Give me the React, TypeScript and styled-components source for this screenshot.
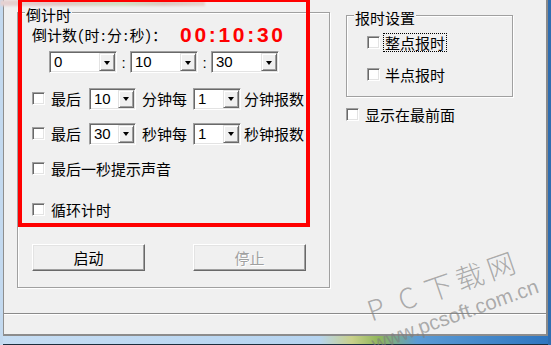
import React from "react";
import styled, { createGlobalStyle } from "styled-components";

const Global = createGlobalStyle`
  html, body { margin: 0; padding: 0; background: #f0f0f0; }
  * { box-sizing: border-box; }
`;

const CJK = `"Noto Sans CJK SC", "Noto Sans", sans-serif`;

const Screen = styled.div`
  position: relative;
  width: 551px;
  height: 345px;
  overflow: hidden;
`;

const Window = styled.div`
  width: 551px;
  height: 345px;
  display: flex;
  flex-direction: column;
  background: #f0f0f0;
  border-left: 3px solid #c3d9ef;
  border-right: 3px solid #2f6db0;
`;

const Client = styled.div`
  flex: 1;
  display: flex;
  flex-direction: column;
  border-left: 1px solid #8e8e8e;
  border-right: 2px solid #8a8a8a;
`;

const Main = styled.div`
  height: 313px;
  display: flex;
  align-items: flex-start;
  padding-left: 13px;
`;

const StatusBar = styled.div`
  height: 23px;
  border-top: 1px solid #8a8a8a;
  border-bottom: 2px solid #8c8c8c;
  box-shadow: inset 0 1px 0 #ffffff;
`;

const BottomFrame = styled.div`
  height: 9px;
  background: linear-gradient(
    90deg,
    #c6ddf3 0%,
    #b6d4f0 58%,
    #c9d08a 64%,
    #8fb65a 69%,
    #5b9bd5 76%,
    #2f76c0 100%
  );
  border-bottom: 1px solid #1d2d3d;
`;

const Group = styled.div<{ $w: number; $h: number; $mt: number; $pl: number }>`
  position: relative;
  width: ${(p) => p.$w}px;
  height: ${(p) => p.$h}px;
  margin-top: ${(p) => p.$mt}px;
  border: 1px solid #a0a0a0;
  box-shadow: inset 1px 1px 0 #ffffff, 1px 1px 0 #ffffff;
  display: flex;
  flex-direction: column;
  align-items: flex-start;
  padding-left: ${(p) => p.$pl}px;
`;

const GroupTitle = styled.span`
  position: absolute;
  left: 7px;
  top: -9px;
  height: 18px;
  line-height: 18px;
  padding: 0 1px;
  background: #f0f0f0;
  font: 15px ${CJK};
  color: #000;
`;

const Row = styled.div<{ $mt: number; $ml?: number; $h?: number }>`
  display: flex;
  align-items: center;
  margin-top: ${(p) => p.$mt}px;
  margin-left: ${(p) => p.$ml ?? 0}px;
  height: ${(p) => p.$h ?? 23}px;
`;

const Text = styled.span<{ $ml?: number; $w?: number }>`
  font: 15px ${CJK};
  font-feature-settings: "hwid" 1;
  line-height: 1;
  color: #000;
  white-space: nowrap;
  margin-left: ${(p) => p.$ml ?? 0}px;
  ${(p) => (p.$w ? `width: ${p.$w}px;` : "")}
`;

const FocusText = styled.span`
  font: 15px ${CJK};
  line-height: 1;
  color: #000;
  white-space: nowrap;
  margin-left: 3px;
  padding: 1px 1px;
  border: 1px dotted #000;
`;

const Time = styled.span`
  font: bold 21px "Liberation Sans", Arial, sans-serif;
  letter-spacing: 2.7px;
  color: #ff0000;
  line-height: 1;
`;

const Sep = styled.span`
  width: 13px;
  text-align: center;
  font: 15px "Liberation Sans", Arial, sans-serif;
  color: #000;
`;

const Combo = styled.div<{ $w: number; $ml?: number }>`
  display: flex;
  width: ${(p) => p.$w}px;
  height: 22px;
  margin-left: ${(p) => p.$ml ?? 0}px;
  padding: 1px;
  background: #ffffff;
  border: 1px solid;
  border-color: #a0a0a0 #ffffff #ffffff #a0a0a0;
  box-shadow: inset 1px 1px 0 #696969, inset -1px -1px 0 #e3e3e3;
`;

const ComboValue = styled.span`
  flex: 1;
  padding-left: 3px;
  font: 15px "Liberation Sans", Arial, sans-serif;
  line-height: 18px;
  color: #000;
`;

const ComboButton = styled.span`
  width: 16px;
  height: 18px;
  display: flex;
  align-items: center;
  justify-content: center;
  background: #f0f0f0;
  border: 1px solid;
  border-color: #e3e3e3 #696969 #696969 #e3e3e3;
  box-shadow: inset 1px 1px 0 #ffffff, inset -1px -1px 0 #a0a0a0;
`;

const Arrow = styled.span`
  width: 0;
  height: 0;
  margin-top: 1px;
  border-left: 3.5px solid transparent;
  border-right: 3.5px solid transparent;
  border-top: 4px solid #000;
`;

const Check = styled.span`
  width: 13px;
  height: 13px;
  flex: none;
  background: #ffffff;
  border: 1px solid;
  border-color: #a0a0a0 #ffffff #ffffff #a0a0a0;
  box-shadow: inset 1px 1px 0 #696969, inset -1px -1px 0 #e3e3e3;
`;

const ButtonRow = styled.div`
  display: flex;
  gap: 48px;
  margin-top: 23px;
`;

const Button = styled.div<{ $disabled?: boolean }>`
  width: 113px;
  height: 27px;
  display: flex;
  align-items: center;
  justify-content: center;
  background: #f0f0f0;
  border: 1px solid;
  border-color: #ffffff #696969 #696969 #ffffff;
  box-shadow: inset -1px -1px 0 #a0a0a0, inset 1px 1px 0 #e3e3e3;
  font: 15px ${CJK};
  color: ${(p) => (p.$disabled ? "#a0a0a0" : "#000")};
  text-shadow: ${(p) => (p.$disabled ? "1px 1px 0 #ffffff" : "none")};
`;

const RightColumn = styled.div`
  display: flex;
  flex-direction: column;
  margin-left: 16px;
`;

const RedFrame = styled.div`
  position: absolute;
  left: 18px;
  top: -2px;
  width: 292px;
  height: 229px;
  border: 4px solid #ff0000;
  pointer-events: none;
`;

const TopBlur = styled.div`
  position: absolute;
  left: 0;
  top: 0;
  width: 205px;
  height: 6px;
  background: linear-gradient(
    90deg,
    #e6d2d2 0%,
    #e2c8c6 30%,
    #d6d6c4 45%,
    #cfe0c4 60%,
    #dcc9c2 80%,
    #e6d3ce 100%
  );
  filter: blur(0.8px);
`;

const WmBig = styled.div`
  position: absolute;
  left: 438px;
  top: 286px;
  display: flex;
  transform: translate(-50%, -50%) rotate(-19deg);
  font: 300 28px ${CJK};
  color: rgba(125, 125, 125, 0.62);
  pointer-events: none;
`;

const WmChar = styled.span`
  width: 33px;
  text-align: center;
`;

const WmUrl = styled.div`
  position: absolute;
  left: 455px;
  top: 315px;
  transform: translate(-50%, -50%) rotate(-19.6deg);
  font: 20.5px "Liberation Sans", Arial, sans-serif;
  color: rgba(125, 125, 125, 0.62);
  white-space: nowrap;
  pointer-events: none;
`;

const ComboBox = ({ value, w, ml }: { value: string; w: number; ml?: number }) => (
  <Combo $w={w} $ml={ml}>
    <ComboValue>{value}</ComboValue>
    <ComboButton>
      <Arrow />
    </ComboButton>
  </Combo>
);

export default function App() {
  return (
    <>
      <Global />
      <Screen>
        <Window>
          <Client>
            <Main>
              <Group $w={313} $h={276} $mt={12} $pl={14}>
                <GroupTitle>倒计时</GroupTitle>
                <Row $mt={10} $h={22}>
                  <Text $w={148}>倒计数(时:分:秒)：</Text>
                  <Time>00:10:30</Time>
                </Row>
                <Row $mt={6} $ml={17} $h={22}>
                  <ComboBox value="0" w={68} />
                  <Sep>:</Sep>
                  <ComboBox value="10" w={68} />
                  <Sep>:</Sep>
                  <ComboBox value="30" w={68} />
                </Row>
                <Row $mt={14}>
                  <Check />
                  <Text $ml={6} $w={30}>最后</Text>
                  <ComboBox value="10" w={47} ml={8} />
                  <Text $ml={6} $w={45}>分钟每</Text>
                  <ComboBox value="1" w={48} ml={6} />
                  <Text $ml={3}>分钟报数</Text>
                </Row>
                <Row $mt={12}>
                  <Check />
                  <Text $ml={6} $w={30}>最后</Text>
                  <ComboBox value="30" w={47} ml={8} />
                  <Text $ml={6} $w={45}>秒钟每</Text>
                  <ComboBox value="1" w={48} ml={6} />
                  <Text $ml={3}>秒钟报数</Text>
                </Row>
                <Row $mt={12}>
                  <Check />
                  <Text $ml={6}>最后一秒提示声音</Text>
                </Row>
                <Row $mt={18}>
                  <Check />
                  <Text $ml={6}>循环计时</Text>
                </Row>
                <ButtonRow>
                  <Button>启动</Button>
                  <Button $disabled>停止</Button>
                </ButtonRow>
              </Group>
              <RightColumn>
                <Group $w={167} $h={82} $mt={15} $pl={20}>
                  <GroupTitle>报时设置</GroupTitle>
                  <Row $mt={16} $h={20}>
                    <Check />
                    <FocusText>整点报时</FocusText>
                  </Row>
                  <Row $mt={12} $h={20}>
                    <Check />
                    <Text $ml={5}>半点报时</Text>
                  </Row>
                </Group>
                <Row $mt={7} $h={21}>
                  <Check />
                  <Text $ml={6}>显示在最前面</Text>
                </Row>
              </RightColumn>
            </Main>
            <StatusBar />
          </Client>
          <BottomFrame />
        </Window>
        <TopBlur />
        <RedFrame />
        <WmBig>
          <WmChar>P</WmChar>
          <WmChar>C</WmChar>
          <WmChar>下</WmChar>
          <WmChar>载</WmChar>
          <WmChar>网</WmChar>
        </WmBig>
        <WmUrl>www.pcsoft.com.cn</WmUrl>
      </Screen>
    </>
  );
}
